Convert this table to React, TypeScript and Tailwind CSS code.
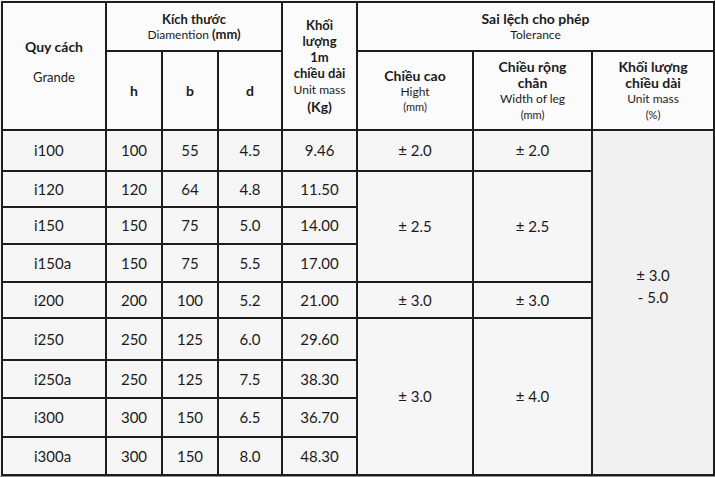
import React from 'react'

const rows = [
  { name: 'i100', h: '100', b: '55', d: '4.5', m: '9.46', ht: 41 },
  { name: 'i120', h: '120', b: '64', d: '4.8', m: '11.50', ht: 36 },
  { name: 'i150', h: '150', b: '75', d: '5.0', m: '14.00', ht: 37 },
  { name: 'i150a', h: '150', b: '75', d: '5.5', m: '17.00', ht: 38 },
  { name: 'i200', h: '200', b: '100', d: '5.2', m: '21.00', ht: 36 },
  { name: 'i250', h: '250', b: '125', d: '6.0', m: '29.60', ht: 42 },
  { name: 'i250a', h: '250', b: '125', d: '7.5', m: '38.30', ht: 38 },
  { name: 'i300', h: '300', b: '150', d: '6.5', m: '36.70', ht: 39 },
  { name: 'i300a', h: '300', b: '150', d: '8.0', m: '48.30', ht: 38 },
]

// tolerance cells keyed by the row index they start on
const tolerance: Record<number, { span: number; hight: string; leg: string }> = {
  0: { span: 1, hight: '± 2.0', leg: '± 2.0' },
  1: { span: 3, hight: '± 2.5', leg: '± 2.5' },
  4: { span: 1, hight: '± 3.0', leg: '± 3.0' },
  5: { span: 4, hight: '± 3.0', leg: '± 4.0' },
}

const cell = 'border-2 border-[#1d1d1d] p-0 align-middle'

export default function App() {
  return (
    <div
      className="w-[715px] h-[477px] bg-[#8a8a8a] overflow-hidden text-[#1b1b1b]"
      style={{ fontFamily: 'Lato, "Noto Sans", sans-serif' }}
    >
      <div className="bg-[#f3f3f3] pt-px pl-px w-[714px] h-[476px]">
        <table className="border-collapse table-fixed w-[712px] bg-[#f6f6f6]">
          <colgroup>
            <col className="w-[104px]" />
            <col className="w-[56px]" />
            <col className="w-[56px]" />
            <col className="w-[64px]" />
            <col className="w-[75px]" />
            <col className="w-[116px]" />
            <col className="w-[119px]" />
            <col className="w-[122px]" />
          </colgroup>
          <thead className="bg-[#fbfbfb]">
            <tr className="h-[49px]">
              <th rowSpan={2} className={`${cell} text-center`}>
                <div className="text-[14px] font-bold leading-[16px]">Quy cách</div>
                <div className="text-[13px] font-normal leading-[16px] mt-[14px] pb-[8px]">Grande</div>
              </th>
              <th colSpan={3} className={`${cell} text-center`}>
                <div className="text-[13px] font-bold leading-[16px]">Kích thước</div>
                <div className="text-[12px] font-normal leading-[15px]">
                  Diamention <span className="font-bold text-[13px]">(mm)</span>
                </div>
              </th>
              <th rowSpan={2} className={`${cell} text-center`}>
                <div className="text-[13px] font-bold leading-[16px]">
                  <div>Khối</div>
                  <div>lượng</div>
                  <div>1m</div>
                  <div>chiều dài</div>
                </div>
                <div className="text-[12px] font-normal leading-[17px]">Unit mass</div>
                <div className="text-[14px] font-bold leading-[17px]">(Kg)</div>
              </th>
              <th colSpan={3} className={`${cell} text-center`}>
                <div className="text-[14px] font-bold leading-[16px]">Sai lệch cho phép</div>
                <div className="text-[12px] font-normal leading-[15px]">Tolerance</div>
              </th>
            </tr>
            <tr className="h-[79px]">
              <th className={`${cell} text-[14px] font-bold`}>h</th>
              <th className={`${cell} text-[14px] font-bold`}>b</th>
              <th className={`${cell} text-[14px] font-bold`}>d</th>
              <th className={`${cell} text-center`}>
                <div className="text-[14px] font-bold leading-[16px]">Chiều cao</div>
                <div className="text-[12px] font-normal leading-[15px]">Hight</div>
                <div className="text-[11px] font-normal leading-[15px]">(mm)</div>
              </th>
              <th className={`${cell} text-center`}>
                <div className="text-[14px] font-bold leading-[16px]">
                  <div>Chiều rộng</div>
                  <div>chân</div>
                </div>
                <div className="text-[12px] font-normal leading-[16px]">Width of leg</div>
                <div className="text-[11px] font-normal leading-[15px]">(mm)</div>
              </th>
              <th className={`${cell} text-center`}>
                <div className="text-[14px] font-bold leading-[16px]">
                  <div>Khối lượng</div>
                  <div>chiều dài</div>
                </div>
                <div className="text-[12px] font-normal leading-[16px]">Unit mass</div>
                <div className="text-[11px] font-normal leading-[15px]">(%)</div>
              </th>
            </tr>
          </thead>
          <tbody className="text-[15px]">
            {rows.map((r, i) => {
              const tol = tolerance[i]
              return (
                <tr key={r.name} style={{ height: r.ht }}>
                  <td className={`${cell} pl-[31px] text-left`}>{r.name}</td>
                  <td className={`${cell} text-center`}>{r.h}</td>
                  <td className={`${cell} text-center`}>{r.b}</td>
                  <td className={`${cell} text-center`}>{r.d}</td>
                  <td className={`${cell} text-center`}>{r.m}</td>
                  {tol && (
                    <td rowSpan={tol.span} className={`${cell} text-center`}>
                      {tol.hight}
                    </td>
                  )}
                  {tol && (
                    <td rowSpan={tol.span} className={`${cell} text-center`}>
                      {tol.leg}
                    </td>
                  )}
                  {i === 0 && (
                    <td rowSpan={9} className={`${cell} text-center bg-[#f1f1f1]`}>
                      <div className="leading-[22px] pb-[34px]">
                        <div>± 3.0</div>
                        <div>- 5.0</div>
                      </div>
                    </td>
                  )}
                </tr>
              )
            })}
          </tbody>
        </table>
      </div>
    </div>
  )
}
